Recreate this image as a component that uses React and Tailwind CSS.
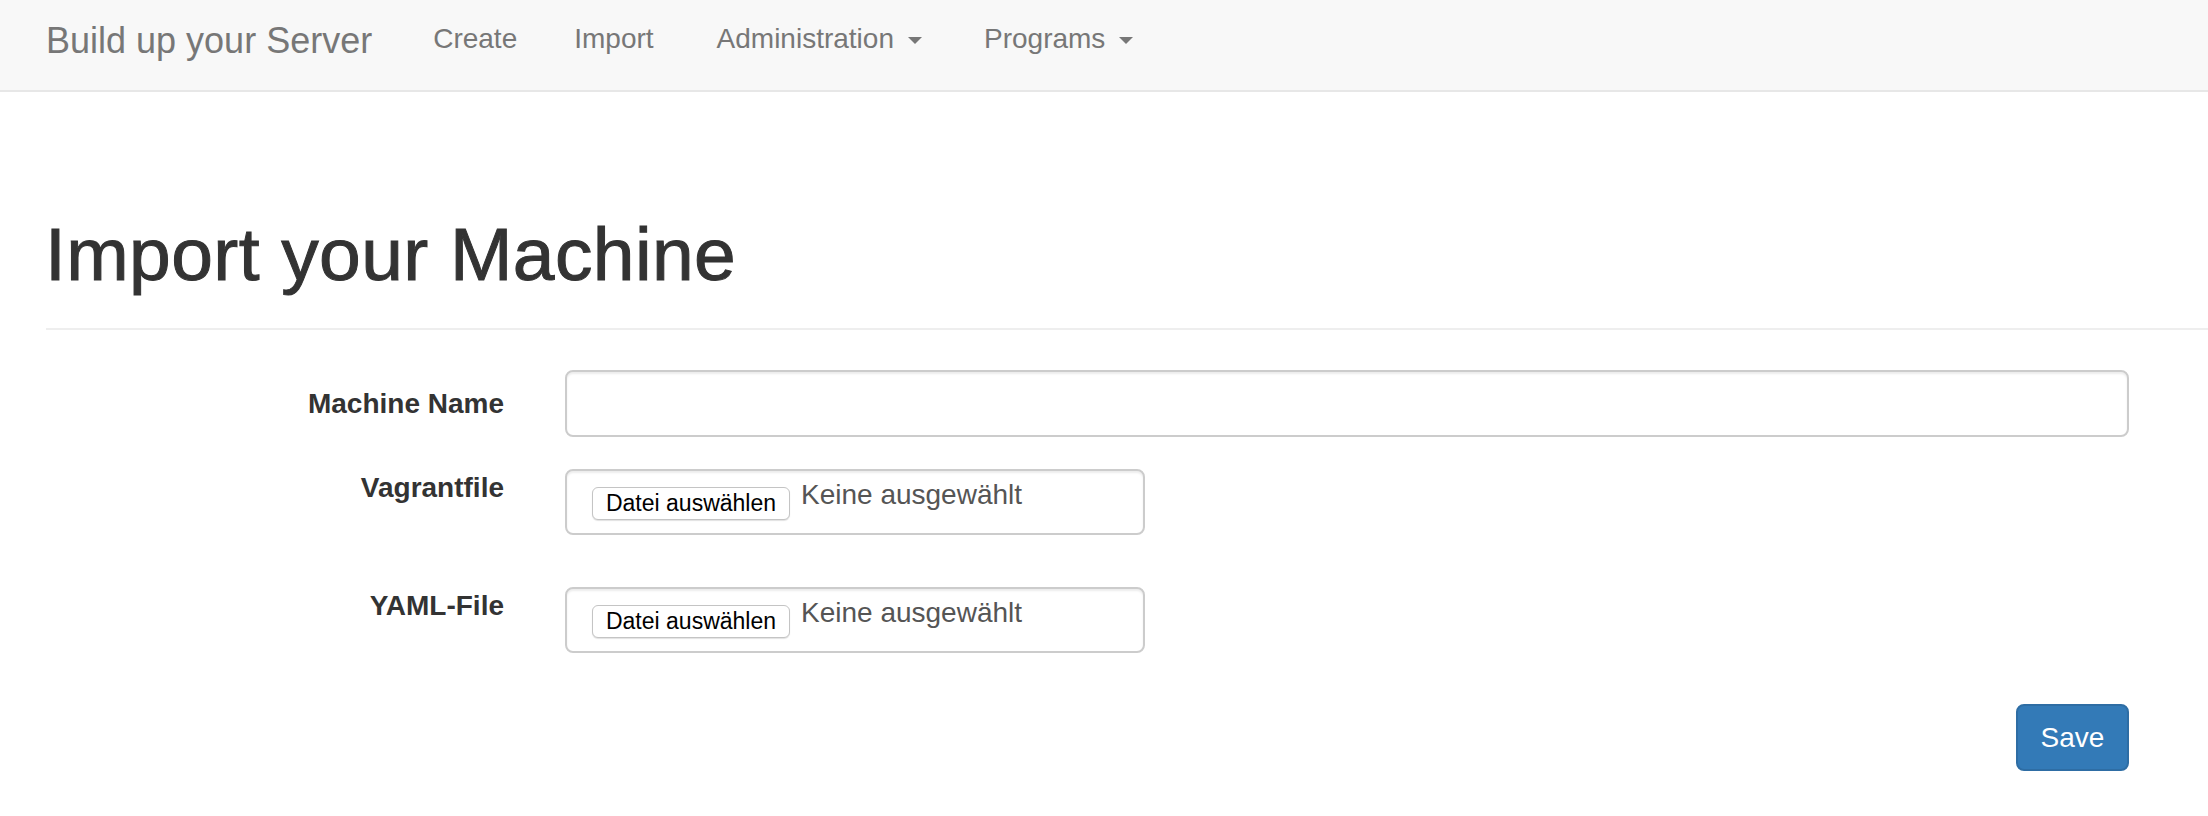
import React from 'react';

// Navbar link with optional dropdown caret
function NavItem({ label, caret, className }) {
    return (
        <div className={`flex items-center text-[28px] leading-[32px] text-[#777] ${className}`}>
            <span>{label}</span>
            {caret && (
                <span className="ml-[14px] mt-[3px] inline-block h-0 w-0 border-x-[7px] border-t-[7px] border-x-transparent border-t-[#777]"></span>
            )}
        </div>
    );
}

function FileField() {
    return (
        <div className="flex h-[66px] w-[580px] items-start rounded-[8px] border-2 border-[#ccc] pl-[25px] shadow-[inset_0_2px_2px_rgba(0,0,0,0.075)]">
            <button className="mt-[16px] flex h-[33px] w-[198px] items-center justify-center rounded-[6px] border border-[#c4c4c4] bg-white text-[23px] leading-none text-black shadow-[0_1px_1px_rgba(0,0,0,0.12)]">
                Datei auswählen
            </button>
            <span className="ml-[11px] mt-[8px] text-[28px] leading-[32px] text-[#555]">Keine ausgewählt</span>
        </div>
    );
}

export default function App() {
    return (
        <div className="min-h-[816px] bg-white font-['Liberation_Sans',Arial,sans-serif]">
            {/* Navbar */}
            <div className="flex h-[92px] items-start border-b-2 border-[#e7e7e7] bg-[#f8f8f8] pl-[46px]">
                <div className="mt-[21px] text-[36px] leading-[40px] text-[#777]">Build up your Server</div>
                <NavItem label="Create" className="ml-[61px] mt-[23px]" />
                <NavItem label="Import" className="ml-[57px] mt-[23px]" />
                <NavItem label="Administration" caret className="ml-[63px] mt-[23px]" />
                <NavItem label="Programs" caret className="ml-[62px] mt-[23px]" />
            </div>

            <div className="pl-[46px]">
                {/* Page header */}
                <div className="mt-[121px] border-b-2 border-[#eee] pb-[33px]">
                    <h1 className="-ml-[1px] text-[75px] font-normal leading-[82px] tracking-[0.4px] text-[#333] [-webkit-text-stroke:1px_#333]">Import your Machine</h1>
                </div>

                {/* Form */}
                <div className="w-[2083px] pt-[40px]">
                    <div className="flex">
                        <label className="mt-[18px] w-[458px] text-right text-[28px] font-bold leading-[32px] text-[#333]">Machine Name</label>
                        <input className="ml-[61px] h-[67px] flex-1 rounded-[8px] border-2 border-[#ccc] px-[24px] text-[28px] text-[#555] shadow-[inset_0_2px_2px_rgba(0,0,0,0.075)] outline-none" />
                    </div>

                    <div className="mt-[32px] flex">
                        <label className="mt-[3px] w-[458px] text-right text-[28px] font-bold leading-[32px] text-[#333]">Vagrantfile</label>
                        <div className="ml-[61px]">
                            <FileField />
                        </div>
                    </div>

                    <div className="mt-[52px] flex">
                        <label className="mt-[3px] w-[458px] text-right text-[28px] font-bold leading-[32px] text-[#333]">YAML-File</label>
                        <div className="ml-[61px]">
                            <FileField />
                        </div>
                    </div>

                    <div className="mt-[51px] flex justify-end">
                        <button className="flex h-[67px] w-[113px] items-center justify-center rounded-[8px] border-2 border-[#2e6da4] bg-[#337ab7] text-[28px] leading-none text-white">
                            Save
                        </button>
                    </div>
                </div>
            </div>
        </div>
    );
}
